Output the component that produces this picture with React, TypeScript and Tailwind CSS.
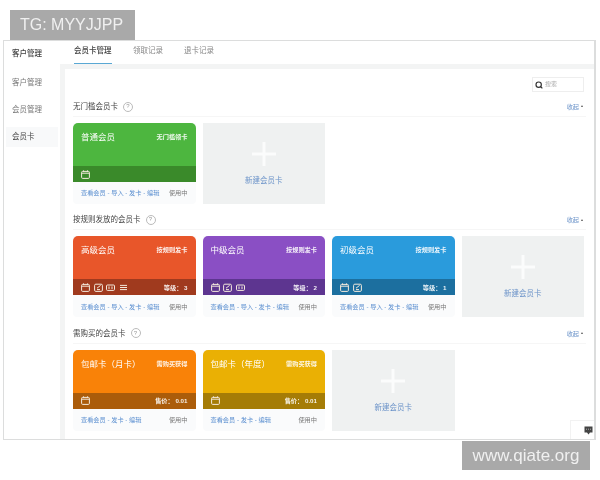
import { Search } from "lucide-react"

type Card = {
  name: string
  tag: string
  color: string
  bar: string
  icons: number
  value?: string
  links: string
}

const sections: { title: string; cards: Card[] }[] = [
  {
    title: "无门槛会员卡",
    cards: [
      { name: "普通会员", tag: "无门槛领卡", color: "bg-[#4db63f]", bar: "bg-[#3a8a2a]", icons: 1, links: "查看会员 - 导入 - 发卡 - 编辑" },
    ],
  },
  {
    title: "按规则发放的会员卡",
    cards: [
      { name: "高级会员", tag: "按规则发卡", color: "bg-[#e8562a]", bar: "bg-[#a03a1e]", icons: 4, value: "等级： 3", links: "查看会员 - 导入 - 发卡 - 编辑" },
      { name: "中级会员", tag: "按规则发卡", color: "bg-[#8a4fc4]", bar: "bg-[#5d3590]", icons: 3, value: "等级： 2", links: "查看会员 - 导入 - 发卡 - 编辑" },
      { name: "初级会员", tag: "按规则发卡", color: "bg-[#2a9bdc]", bar: "bg-[#1c6f9f]", icons: 2, value: "等级： 1", links: "查看会员 - 导入 - 发卡 - 编辑" },
    ],
  },
  {
    title: "需购买的会员卡",
    cards: [
      { name: "包邮卡（月卡）", tag: "需购买获得", color: "bg-[#f98208]", bar: "bg-[#ab5c0a]", icons: 1, value: "售价： 0.01", links: "查看会员 - 发卡 - 编辑" },
      { name: "包邮卡（年度）", tag: "需购买获得", color: "bg-[#eab004]", bar: "bg-[#a57c06]", icons: 1, value: "售价： 0.01", links: "查看会员 - 发卡 - 编辑" },
    ],
  },
]

function BarIcon({ kind }: { kind: number }) {
  return (
    <svg width="9" height="9" viewBox="0 0 9 9" fill="none" stroke="#f3e9dc" strokeWidth="1">
      {kind === 0 && (
        <>
          <rect x="0.6" y="1.4" width="7.8" height="7" rx="1" />
          <path d="M0.6 3.2H8.4M2.5 0.4V1.8M6.5 0.4V1.8" />
        </>
      )}
      {kind === 1 && (
        <>
          <rect x="0.6" y="1.2" width="7.8" height="7.2" rx="1.2" />
          <path d="M3 5.2L6.6 2.4M3 6.6H6" />
        </>
      )}
      {kind === 2 && (
        <>
          <rect x="0.5" y="2" width="8" height="5.4" rx="1" />
          <path d="M3 3.4V6M6 3.4V6" />
        </>
      )}
      {kind === 3 && <path d="M1 2.4H8M1 4.5H8M1 6.6H8" />}
    </svg>
  )
}

function MemberCard({ card }: { card: Card }) {
  return (
    <div className="w-[122.5px] h-[81px] shrink-0 flex flex-col bg-[#fafbfc] rounded-b-[4px]">
      <div className={`h-[43px] rounded-t-[5px] px-[8px] pt-[7px] flex justify-between text-white ${card.color}`}>
        <span className="text-[8.5px] leading-[14px]">{card.name}</span>
        <span className="text-[6.2px] leading-[14px] font-bold text-white/90">{card.tag}</span>
      </div>
      <div className={`h-[16px] px-[8px] flex items-center justify-between ${card.bar}`}>
        <div className="flex items-center gap-[3.5px]">
          {Array.from({ length: card.icons }).map((_, i) => (
            <BarIcon key={i} kind={i} />
          ))}
        </div>
        {card.value && <span className="text-[6.2px] font-bold text-white/90">{card.value}</span>}
      </div>
      <div className="flex-1 px-[8px] flex items-center justify-between">
        <span className="text-[6.2px] text-[#5b8fd0]">{card.links}</span>
        <span className="text-[6.2px] text-[#777]">使用中</span>
      </div>
    </div>
  )
}

function AddCard() {
  return (
    <div className="w-[122.5px] h-[81px] shrink-0 bg-[#eff1f1] flex flex-col items-center pt-[18px]">
      <svg width="26" height="26" viewBox="0 0 26 26" fill="#fbfcfc">
        <rect x="11.5" y="1" width="3" height="24" />
        <rect x="1" y="11.5" width="24" height="3" />
      </svg>
      <span className="mt-[9px] text-[7.5px] leading-[10px] text-[#6b93c9]">新建会员卡</span>
    </div>
  )
}

export default function App() {
  return (
    <div className="w-[600px] h-[480px] bg-white overflow-hidden blur-[0.35px] [font-family:'Liberation_Sans','Noto_Sans_CJK_SC',sans-serif]">
      <div className="h-[10px]" />
      {/* watermark top */}
      <div className="ml-[10px] w-[125px] h-[30px] bg-[#a9a9a9] text-[#f0f0f0] text-[16px] flex items-center pl-[10px]">
        TG: MYYJJPP
      </div>

      <div className="relative ml-[3px] w-[593px] h-[400px] border border-[#dcdddd] border-r-2 flex overflow-hidden">
        {/* sidebar */}
        <div className="w-[56px] shrink-0 flex flex-col text-[7.5px] text-[#666]">
          <div className="h-[24px] pl-[8px] pt-[1px] flex items-center font-medium text-[#444]">客户管理</div>
          <div className="mt-[8px] flex flex-col gap-[7px] px-[2px]">
            <div className="h-[20px] pl-[6px] flex items-center text-[#777]">客户管理</div>
            <div className="h-[20px] pl-[6px] flex items-center text-[#777]">会员管理</div>
            <div className="h-[20px] pl-[6px] flex items-center bg-[#f8f9fa] text-[#444]">会员卡</div>
          </div>
        </div>

        <div className="flex-1 flex flex-col min-w-0">
          {/* tabs */}
          <div className="h-[23px] shrink-0 pl-[14px] flex gap-[21px] text-[7.5px]">
            <div className="h-[23px] w-[38px] border-b-[1.5px] border-[#5aa8d4] text-[#444] font-medium pt-[5px] leading-[10px]">会员卡管理</div>
            <div className="pt-[5px] leading-[10px] text-[#888]">领取记录</div>
            <div className="pt-[5px] leading-[10px] text-[#888]">退卡记录</div>
          </div>

          {/* content area */}
          <div className="flex-1 min-h-0 bg-[#f3f4f4] pl-[5px] pt-[5px]">
            <div className="h-full bg-white pl-[8px] pr-[8px]">
              <div className="h-[31px] flex justify-end pt-[8px] pr-[2px]">
                <div className="w-[52px] h-[15px] border border-[#eeeeee] flex items-center pl-[2px] gap-[2px]">
                  <Search size={8} strokeWidth={3.5} className="text-[#333]" />
                  <span className="text-[6px] text-[#aaa]">搜索</span>
                </div>
              </div>
              {sections.map((section) => (
                <div key={section.title} className="h-[113.4px]">
                  <div className="h-[17px] flex items-center justify-between border-b border-[#f6f6f6] pb-[4px] pt-[1px]">
                    <div className="flex items-center">
                      <span className="text-[7.5px] text-[#444]">{section.title}</span>
                      <span className="ml-[5px] w-[10px] h-[10px] rounded-full border border-[#bbb] flex items-center justify-center text-[6px] text-[#999]">?</span>
                    </div>
                    <div className="flex items-center gap-[2px] text-[6.2px] text-[#6b93c9] pr-[3px]">
                      收起
                      <span className="w-0 h-0 border-x-[1.5px] border-x-transparent border-b-[2.5px] border-b-[#555]" />
                    </div>
                  </div>
                  <div className="mt-[6px] flex gap-[7px]">
                    {section.cards.map((card) => (
                      <MemberCard key={card.name} card={card} />
                    ))}
                    <AddCard />
                  </div>
                </div>
              ))}
            </div>
          </div>
        </div>

        {/* feedback button */}
        <div className="absolute right-0 bottom-0 w-[24px] h-[19px] bg-white border-l border-t border-[#f2f2f2] flex items-center justify-end pr-[1px]">
          <svg width="9" height="9" viewBox="0 0 9 9">
            <path d="M0.5 0.5H8.5V6.5H6L4.5 8.5L3 6.5H0.5Z" fill="#444" />
            <path d="M2 3.2H7" stroke="#ccc" strokeWidth="0.8" strokeDasharray="1 1" />
          </svg>
        </div>
      </div>

      {/* watermark bottom */}
      <div className="ml-[462px] mt-[1px] w-[128px] h-[29px] bg-[#a9a9a9] text-[#f0f0f0] text-[17px] flex items-center justify-center">
        www.qiate.org
      </div>
    </div>
  )
}
